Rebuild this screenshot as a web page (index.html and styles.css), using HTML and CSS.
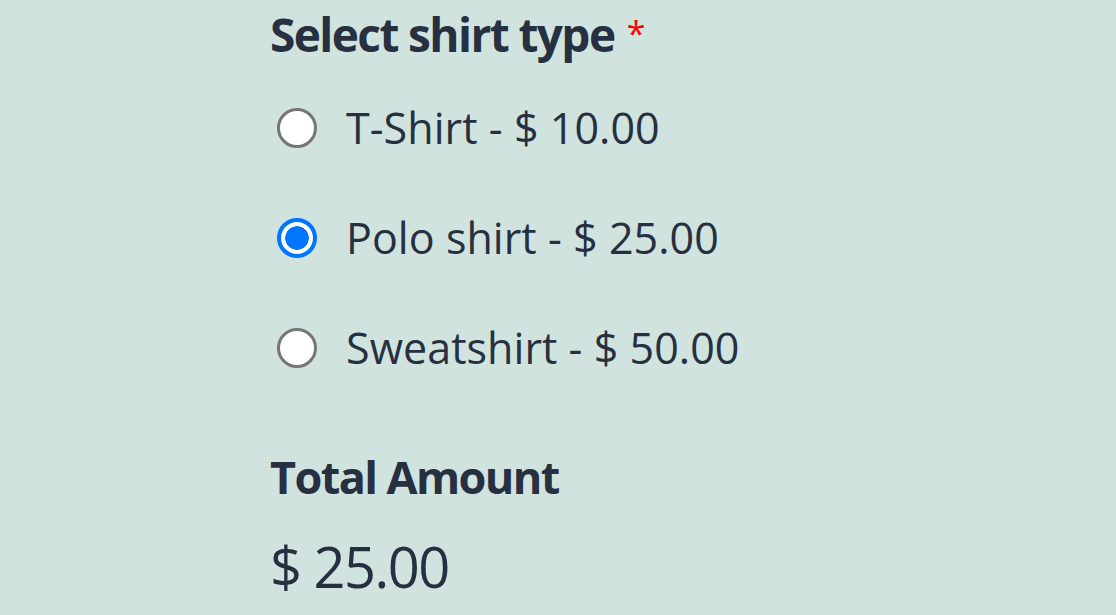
FILE: index.html
```html
<!DOCTYPE html>
<html lang="en">
<head>
<meta charset="utf-8">
<title>Select shirt type</title>
<link rel="stylesheet" href="styles.css">
</head>
<body>
<form class="form">
  <fieldset class="field">
    <legend class="field-label">Select shirt type <span class="req">*</span></legend>
    <ul class="choices">
      <li class="choice"><span class="radio"></span><span class="choice-text">T-Shirt - $ 10.00</span></li>
      <li class="choice"><span class="radio checked"></span><span class="choice-text">Polo shirt - $ 25.00</span></li>
      <li class="choice"><span class="radio"></span><span class="choice-text">Sweatshirt - $ 50.00</span></li>
    </ul>
  </fieldset>
  <div class="total">
    <div class="total-label">Total Amount</div>
    <div class="total-value">$ 25.00</div>
  </div>
</form>
</body>
</html>
```
FILE: styles.css
```css
html, body {
  margin: 0;
  padding: 0;
  background: #d1e3de;
}
body {
  font-family: "Open Sans", "Noto Sans", sans-serif;
  color: #263040;
  width: 1116px;
  height: 615px;
  overflow: hidden;
}
.form {
  padding: 3px 0 0 270px;
  display: flex;
  flex-direction: column;
}
.field {
  border: 0;
  margin: 0;
  padding: 0;
}
.field-label {
  padding: 0 0 9px 0;
  font-size: 46px;
  font-weight: 700;
  line-height: 60px;
  letter-spacing: -1.6px;
}
.req {
  color: #ff0000;
  font-weight: 400;
  font-size: 34px;
  letter-spacing: 0;
  vertical-align: 6px;
  margin-left: 2px;
}
.choices {
  list-style: none;
  margin: 0;
  padding: 0;
}
.choice {
  height: 110px;
  display: flex;
  align-items: center;
  gap: 29px;
  padding-left: 7px;
}
.radio {
  box-sizing: border-box;
  width: 40px;
  height: 40px;
  border-radius: 50%;
  border: 3px solid #767676;
  background: #fff;
  flex: none;
}
.radio.checked {
  border: 4px solid #0075ff;
  background: radial-gradient(circle, #0075ff 0 11.5px, #fff 12px);
}
.choice-text {
  font-size: 43px;
  line-height: 60px;
  letter-spacing: 0.05px;
}
.total {
  padding-top: 44px;
}
.total-label {
  font-size: 45px;
  font-weight: 700;
  line-height: 60px;
  letter-spacing: -1.6px;
}
.total-value {
  margin-top: 24px;
  font-size: 56px;
  line-height: 70px;
  letter-spacing: -1.5px;
}
```
